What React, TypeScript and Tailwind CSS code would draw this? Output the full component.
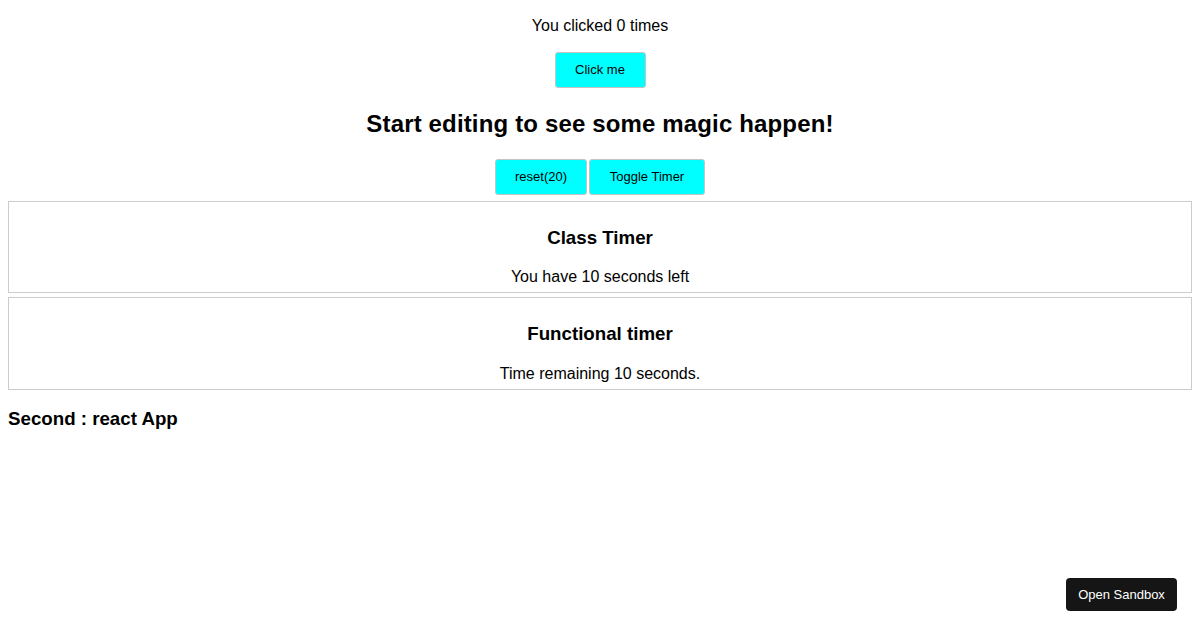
import { useState } from 'react';

const btn =
    'h-[36px] bg-[#00ffff] border border-[#c4c4c4] rounded-[3px] text-[13px] text-black';

const App = () => {
    const [count, setCount] = useState(0);
    const [seconds, setSeconds] = useState(10);

    return (
        <div className="min-h-[630px] px-2 text-black bg-white font-['Liberation_Sans',Arial,sans-serif]">
            <p className="pt-[17px] text-center text-[16px] leading-[18px]">You clicked {count} times</p>
            <div className="mt-[17px] flex justify-center">
                <button className={`${btn} w-[91px]`} onClick={() => setCount(count + 1)}>
                    Click me
                </button>
            </div>

            <h2 className="mt-[22px] text-center text-[24px] leading-[28px] font-bold tracking-[0.15px]">
                Start editing to see some magic happen!
            </h2>

            <div className="mt-[21px] flex justify-center gap-[2px]">
                <button className={`${btn} w-[92px]`} onClick={() => setSeconds(20)}>
                    reset(20)
                </button>
                <button className={`${btn} w-[116px]`}>Toggle Timer</button>
            </div>

            {/* Class timer */}
            <div className="mt-[6px] border border-[#cccccc] pt-[25px] pb-[6px] text-center">
                <h3 className="text-[18.72px] leading-[22px] font-bold">Class Timer</h3>
                <p className="mt-[19px] text-[16px] leading-[18px]">You have {seconds} seconds left</p>
            </div>

            {/* Functional timer */}
            <div className="mt-[4px] border border-[#cccccc] pt-[25px] pb-[6px] text-center">
                <h3 className="text-[18.72px] leading-[22px] font-bold">Functional timer</h3>
                <p className="mt-[20px] text-[16px] leading-[18px]">Time remaining {seconds} seconds.</p>
            </div>

            <h3 className="mt-[18px] text-[18.72px] leading-[22px] font-bold">Second : react App</h3>

            <button className="fixed right-[23px] bottom-[19px] h-[33px] w-[111px] rounded-[4px] bg-[#151515] text-[13px] text-white">
                Open Sandbox
            </button>
        </div>
    );
};

export default App;
